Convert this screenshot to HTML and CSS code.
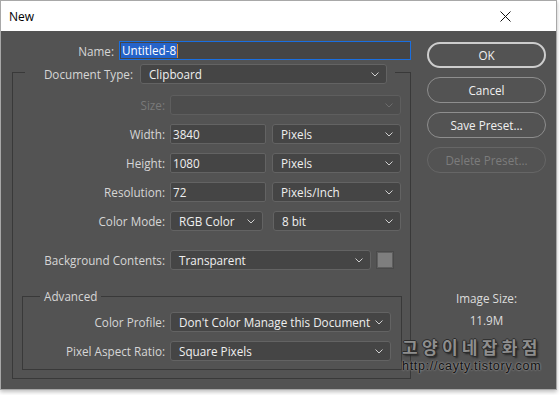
FILE: index.html
```html
<!DOCTYPE html>
<html lang="en">
<head>
<meta charset="utf-8">
<title>New</title>
<link rel="stylesheet" href="styles.css">
</head>
<body>
<div class="window">
  <div class="titlebar">
    <span class="title">New</span>
    <svg class="close" width="11" height="11" viewBox="0 0 11 11"><path d="M0.5 0.5L10.5 10.5M10.5 0.5L0.5 10.5" stroke="#111" stroke-width="1" fill="none"/></svg>
  </div>
  <div class="body">
    <div class="main">
      <div class="name-row">
        <span class="label name-label">Name:</span>
        <div class="name-input"><span class="sel">Untitled-8</span><span class="caret"></span></div>
      </div>
      <fieldset class="frame outer">
        <legend class="doc-legend">
          <span class="label doc-label">Document Type:</span>
          <div class="select doc-select"><span>Clipboard</span><svg class="chev" width="8" height="5" viewBox="0 0 8 5"><path d="M0.5 0.5L4 4L7.5 0.5" fill="none" stroke="#cfcfcf" stroke-width="1"/></svg></div>
        </legend>
        <div class="row">
          <span class="label disabled">Size:</span>
          <div class="select size-select disabled-field"><span></span><svg class="chev" width="8" height="5" viewBox="0 0 8 5"><path d="M0.5 0.5L4 4L7.5 0.5" fill="none" stroke="#6c6c6c" stroke-width="1"/></svg></div>
        </div>
        <div class="row">
          <span class="label">Width:</span>
          <div class="input num">3840</div>
          <div class="select unit"><span>Pixels</span><svg class="chev" width="8" height="5" viewBox="0 0 8 5"><path d="M0.5 0.5L4 4L7.5 0.5" fill="none" stroke="#cfcfcf" stroke-width="1"/></svg></div>
        </div>
        <div class="row">
          <span class="label">Height:</span>
          <div class="input num">1080</div>
          <div class="select unit"><span>Pixels</span><svg class="chev" width="8" height="5" viewBox="0 0 8 5"><path d="M0.5 0.5L4 4L7.5 0.5" fill="none" stroke="#cfcfcf" stroke-width="1"/></svg></div>
        </div>
        <div class="row">
          <span class="label">Resolution:</span>
          <div class="input num">72</div>
          <div class="select unit"><span>Pixels/Inch</span><svg class="chev" width="8" height="5" viewBox="0 0 8 5"><path d="M0.5 0.5L4 4L7.5 0.5" fill="none" stroke="#cfcfcf" stroke-width="1"/></svg></div>
        </div>
        <div class="row row-mode">
          <span class="label">Color Mode:</span>
          <div class="select mode"><span>RGB Color</span><svg class="chev" width="8" height="5" viewBox="0 0 8 5"><path d="M0.5 0.5L4 4L7.5 0.5" fill="none" stroke="#cfcfcf" stroke-width="1"/></svg></div>
          <div class="select bits"><span>8 bit</span><svg class="chev" width="8" height="5" viewBox="0 0 8 5"><path d="M0.5 0.5L4 4L7.5 0.5" fill="none" stroke="#cfcfcf" stroke-width="1"/></svg></div>
        </div>
        <div class="row row-bg">
          <span class="label">Background Contents:</span>
          <div class="select bg-select"><span>Transparent</span><svg class="chev" width="8" height="5" viewBox="0 0 8 5"><path d="M0.5 0.5L4 4L7.5 0.5" fill="none" stroke="#cfcfcf" stroke-width="1"/></svg></div>
          <div class="swatch"></div>
        </div>
        <fieldset class="frame advanced">
          <legend class="adv-legend">Advanced</legend>
          <div class="row adv-row">
            <span class="label adv-label">Color Profile:</span>
            <div class="select adv-select"><span>Don't Color Manage this Document</span><svg class="chev" width="8" height="5" viewBox="0 0 8 5"><path d="M0.5 0.5L4 4L7.5 0.5" fill="none" stroke="#cfcfcf" stroke-width="1"/></svg></div>
          </div>
          <div class="row adv-row last">
            <span class="label adv-label">Pixel Aspect Ratio:</span>
            <div class="select adv-select"><span>Square Pixels</span><svg class="chev" width="8" height="5" viewBox="0 0 8 5"><path d="M0.5 0.5L4 4L7.5 0.5" fill="none" stroke="#cfcfcf" stroke-width="1"/></svg></div>
          </div>
        </fieldset>
      </fieldset>
    </div>
    <div class="side">
      <div class="btn primary">OK</div>
      <div class="btn">Cancel</div>
      <div class="btn">Save Preset...</div>
      <div class="btn off">Delete Preset...</div>
      <div class="size-info">
        <span class="size-label">Image Size:</span>
        <span class="size-val">11.9M</span>
      </div>
    </div>
  </div>
  <div class="watermark">
    <span class="wm-kr">고양이네잡화점</span>
    <span class="wm-url">http://cayty.tistory.com</span>
  </div>
</div>
</body>
</html>
```
FILE: styles.css
```css
* { box-sizing: border-box; }
html, body { margin: 0; padding: 0; background: #fff; }
body {
  width: 560px;
  height: 395px;
  overflow: hidden;
  font-family: "Open Sans", "Noto Sans", sans-serif;
  font-size: 11.7px;
}
.window {
  position: relative;
  width: 557px;
  height: 390px;
  border: 1px solid #a8a8a8;
  background: #535353;
  box-shadow: 0 2px 4px rgba(0,0,0,0.25);
}
.titlebar {
  height: 30px;
  background: #fff;
  display: flex;
  align-items: center;
  justify-content: space-between;
  padding: 0 45px 0 8px;
}
.title { color: #000; font-size: 12px; }
.close { display: block; }
.body {
  display: flex;
  padding: 10px 0 0 11px;
  color: #d9d9d9;
}
.main { width: 399px; }
.label { color: #d6d6d6; white-space: nowrap; }
.label.disabled { color: #7a7a7a; }
.name-row { display: flex; align-items: center; height: 19px; }
.name-label { width: 102px; text-align: right; margin-right: 5px; }
.name-input {
  width: 292px;
  height: 19px;
  border: 1px solid #1a6fe0;
  background: #454545;
  display: flex;
  align-items: center;
  padding-left: 1px;
}
.sel { background: #2563c9; color: #fff; line-height: 15px; padding: 0 1px; }
.caret { width: 1px; height: 14px; background: #e08a2a; }
.frame {
  margin: 0;
  min-width: 0;
  border: 1px solid #393939;
}
.outer { width: 399px; padding: 11px 0 0 0; }
.doc-legend {
  margin-left: 12px;
  padding: 4px 8px 0 0;
  display: flex;
  align-items: center;
}
.doc-label { width: 108px; text-align: right; margin-right: 7px; }
.select {
  height: 20px;
  background: #454545;
  border: 1px solid #636363;
  border-radius: 3px;
  display: flex;
  align-items: center;
  justify-content: space-between;
  padding: 0 7px 0 8px;
  color: #efefef;
  white-space: nowrap;
}
.chev { display: block; flex: none; }
.doc-select { width: 247px; }
.row { display: flex; align-items: center; height: 20px; margin-bottom: 9px; }
.row .label { width: 152px; text-align: right; margin-right: 5px; }
.disabled-field { background: #4d4d4d; border-color: #5e5e5e; }
.size-select { width: 231px; }
.input {
  height: 20px;
  background: #454545;
  border: 1px solid #636363;
  border-radius: 2px;
  color: #efefef;
  display: flex;
  align-items: center;
  padding-left: 2px;
}
.num { width: 96px; margin-right: 6px; }
.unit { width: 129px; }
.row-mode { margin-bottom: 19px; }
.mode { width: 93px; margin-right: 10px; }
.bits { width: 128px; }
.row-bg { margin-bottom: 18px; }
.bg-select { width: 201px; margin-right: 6px; }
.swatch { width: 16px; height: 16px; background: #7e7e7e; border: 1px solid #5e5e5e; outline: 1px solid #4a4a4a; }
.advanced { margin: 0 8px 8px 9px; padding: 8px 0 8px 0; }
.adv-legend { margin-left: 17px; padding: 0 4px; line-height: 16px; color: #d6d6d6; }
.row.adv-row .adv-label { width: 142px; }
.adv-row.last { margin-bottom: 0; }
.adv-select { width: 221px; }
.side {
  width: 119px;
  margin-left: 16px;
  padding-top: 1px;
  display: flex;
  flex-direction: column;
  gap: 9px;
}
.btn {
  height: 26px;
  border: 1px solid #8e8e8e;
  border-radius: 13px;
  color: #f0f0f0;
  display: flex;
  align-items: center;
  justify-content: center;
}
.btn.primary { border: 2px solid #cdcdcd; }
.btn.off { border-color: #666; color: #7c7c7c; }
.size-info {
  margin-top: 108px;
  display: flex;
  flex-direction: column;
  align-items: center;
  gap: 6px;
  line-height: 16px;
  color: #dcdcdc;
}
.watermark {
  position: absolute;
  left: 401px;
  top: 335px;
  display: flex;
  flex-direction: column;
  align-items: flex-start;
  pointer-events: none;
}
.wm-kr {
  font-family: "Noto Sans CJK KR", sans-serif;
  font-weight: 700;
  font-size: 17px;
  letter-spacing: 4.3px;
  line-height: 22px;
  color: #8e8e8e;
  text-shadow: 1px 0 0 #2b2b2b, -1px 0 0 #2b2b2b, 0 1px 0 #2b2b2b, 0 -1px 0 #2b2b2b, 2px 2px 2px #222;
}
.wm-url {
  font-family: "Liberation Sans", sans-serif;
  font-size: 12.5px;
  letter-spacing: 0.7px;
  line-height: 16px;
  color: #111;
  text-shadow: 0 0 2px #9a9a9a, 0 0 2px #9a9a9a;
}
```
